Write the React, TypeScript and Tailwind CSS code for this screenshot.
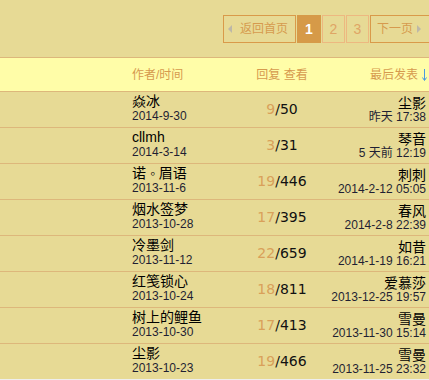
import React from 'react'

interface Topic {
  author: string
  date: string
  replies: number
  views: number
  lastUser: string
  lastTime: string
}

const topics: Topic[] = [
  { author: '焱冰', date: '2014-9-30', replies: 9, views: 50, lastUser: '尘影', lastTime: '昨天 17:38' },
  { author: 'cllmh', date: '2014-3-14', replies: 3, views: 31, lastUser: '琴音', lastTime: '5 天前 12:19' },
  { author: '诺 ◦ 眉语', date: '2013-11-6', replies: 19, views: 446, lastUser: '刺刺', lastTime: '2014-2-12 05:05' },
  { author: '烟水签梦', date: '2013-10-28', replies: 17, views: 395, lastUser: '春风', lastTime: '2014-2-8 22:39' },
  { author: '冷墨剑', date: '2013-11-12', replies: 22, views: 659, lastUser: '如昔', lastTime: '2014-1-19 16:21' },
  { author: '红笺锁心', date: '2013-10-24', replies: 18, views: 811, lastUser: '爱慕莎', lastTime: '2013-12-25 19:57' },
  { author: '树上的鲤鱼', date: '2013-10-30', replies: 17, views: 413, lastUser: '雪曼', lastTime: '2013-11-30 15:14' },
  { author: '尘影', date: '2013-10-23', replies: 19, views: 466, lastUser: '雪曼', lastTime: '2013-11-25 23:32' },
]

const font = { fontFamily: '"Liberation Sans", "Noto Sans CJK SC", sans-serif' }

function Pager() {
  return (
    <div className="flex gap-[1px] pl-[223px] pt-[15px] whitespace-nowrap text-[12px] leading-none">
      <div className="flex items-center h-[28px] w-[73px] shrink-0 border border-[#D99A4A] text-[#D69A4E]">
        <svg width="4" height="8" viewBox="0 0 4 8" className="ml-[4px] mr-[8px]">
          <path d="M4 0 L0 4 L4 8 Z" fill="#BDB8A8" />
        </svg>
        返回首页
      </div>
      <div className="flex items-center justify-center h-[28px] w-[24px] shrink-0 bg-[#D69A48] text-white font-bold text-[14px]">
        1
      </div>
      <div className="flex items-center justify-center h-[28px] w-[23px] shrink-0 border border-[#EDB880] text-[#DFA565] text-[14px]">
        2
      </div>
      <div className="flex items-center justify-center h-[28px] w-[23px] shrink-0 border border-[#EDB880] text-[#DFA565] text-[14px]">
        3
      </div>
      <div className="flex items-center h-[28px] w-[62px] shrink-0 border border-[#D99A4A] text-[#D69A4E] pl-[6px]">
        下一页
        <svg width="4" height="8" viewBox="0 0 4 8" className="ml-[4px]">
          <path d="M0 0 L4 4 L0 8 Z" fill="#BDB8A8" />
        </svg>
      </div>
    </div>
  )
}

function Row({ t, last }: { t: Topic; last: boolean }) {
  return (
    <div
      className={`flex h-[36px] border-b ${last ? 'border-[#EEEEEE]' : 'border-[#DDB77B]'}`}
    >
      <div className="w-[132px] shrink-0" />
      <div className="w-[105px] shrink-0 flex flex-col pt-[1px]">
        <span className="text-[14px] leading-[17px] text-black whitespace-nowrap">{t.author}</span>
        <span className="text-[12px] leading-[12px] text-[#1f1f33]">{t.date}</span>
      </div>
      <div
        className="w-[90px] shrink-0 flex items-center justify-center text-[14px]"
        style={{ fontFamily: '"DejaVu Sans", sans-serif' }}
      >
        <span className="text-[#D9A05A]">{t.replies}</span>
        <span className="text-[#111]">/{t.views}</span>
      </div>
      <div className="flex-1 flex flex-col items-end pt-[3px] pr-[3px]">
        <span className="text-[14px] leading-[16px] text-black">{t.lastUser}</span>
        <span className="text-[12px] leading-[13px] text-[#1f1f33] whitespace-nowrap">{t.lastTime}</span>
      </div>
    </div>
  )
}

export default function App() {
  return (
    <div className="w-[429px] h-[380px] overflow-hidden bg-[#E7DA95]" style={font}>
      <Pager />
      <div className="mt-[14px] flex items-center h-[35px] border-y border-[#DDB77B] bg-[#FFFDA8] text-[12px] text-[#D69A4E]">
        <div className="w-[132px] shrink-0" />
        <div className="w-[105px] shrink-0">作者/时间</div>
        <div className="w-[90px] shrink-0 text-center">回复 查看</div>
        <div className="flex-1 flex items-center justify-end pr-[2px]">
          最后发表
          <svg width="5" height="12" viewBox="0 0 5 12" className="ml-[4px]">
            <path d="M2.5 0 V11 M0.5 8.5 L2.5 11.5 L4.5 8.5" stroke="#4A9BE0" strokeWidth="1" fill="none" />
          </svg>
        </div>
      </div>
      {topics.map((t, i) => (
        <Row key={i} t={t} last={i === topics.length - 1} />
      ))}
    </div>
  )
}
